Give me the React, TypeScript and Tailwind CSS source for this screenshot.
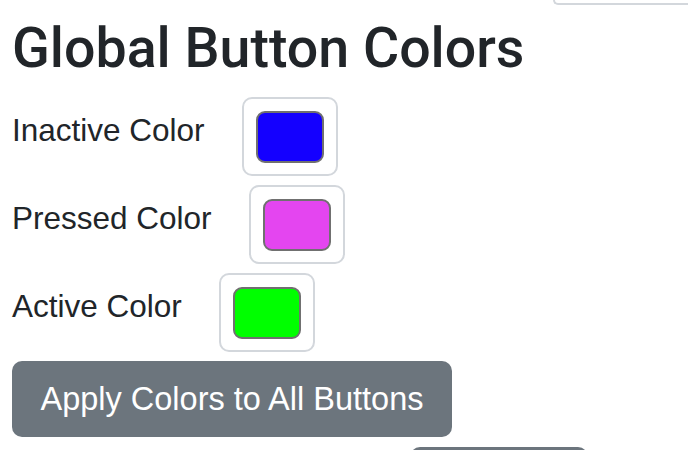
const swatches = [
  { label: "Inactive Color", color: "bg-[#1400ff]" },
  { label: "Pressed Color", color: "bg-[#e445f0]" },
  { label: "Active Color", color: "bg-[#00ff00]" },
];

const App = () => {
  return (
    <div className="w-[688px] h-[450px] overflow-hidden bg-white px-3 font-['Liberation_Sans',Arial,sans-serif] text-[#212529]">
      <div className="flex justify-end">
        <div className="h-[5px] w-[135px] -mr-3 border-b-2 border-l-2 border-[#d3d7dc] rounded-bl-[10px]" />
      </div>
      <h1 className="mt-[14px] font-['Roboto',sans-serif] text-[55.5px] leading-[60px] font-medium">
        Global Button Colors
      </h1>
      <div className="mt-[18px] flex flex-col gap-[9px]">
        {swatches.map((s) => (
          <div key={s.label} className="flex items-start gap-[37px]">
            <label className="mt-[15px] text-[31.5px] leading-[36px]">
              {s.label}
            </label>
            <div className="w-[96px] h-[79px] flex items-center justify-center rounded-[10px] border-2 border-[#d3d7dc] bg-white">
              <div
                className={`w-[68px] h-[52px] rounded-[9px] border-2 border-[#707070] ${s.color}`}
              />
            </div>
          </div>
        ))}
      </div>
      <button className="mt-[9px] w-[440px] h-[76px] rounded-[10px] bg-[#6c757d] text-white text-[32.5px] leading-[40px]">
        Apply Colors to All Buttons
      </button>
      <div className="mt-[10px] ml-[398px] w-[178px] h-[20px] rounded-t-[10px] bg-[#6c757d]" />
    </div>
  );
};

export default App;
